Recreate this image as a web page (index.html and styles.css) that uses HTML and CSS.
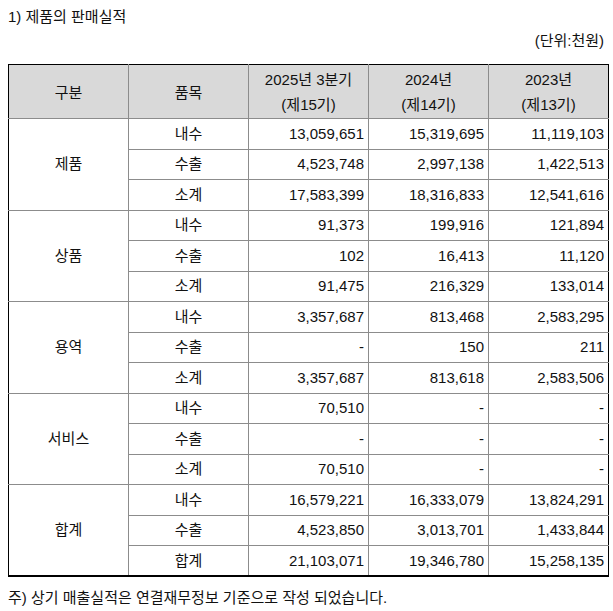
FILE: index.html
```html
<!DOCTYPE html>
<html lang="ko">
<head>
<meta charset="utf-8">
<link rel="stylesheet" href="styles.css">
</head>
<body>
<div class="title">1) 제품의 판매실적</div>
<div class="unit">(단위:천원)</div>
<table class="sales">
  <thead>
    <tr>
      <th>구분</th>
      <th>품목</th>
      <th>2025년 3분기<br>(제15기)</th>
      <th>2024년<br>(제14기)</th>
      <th>2023년<br>(제13기)</th>
    </tr>
  </thead>
  <tbody>
    <tr><td rowspan="3" class="grp">제품</td><td class="item">내수</td><td>13,059,651</td><td>15,319,695</td><td>11,119,103</td></tr>
    <tr><td class="item">수출</td><td>4,523,748</td><td>2,997,138</td><td>1,422,513</td></tr>
    <tr><td class="item">소계</td><td>17,583,399</td><td>18,316,833</td><td>12,541,616</td></tr>
    <tr><td rowspan="3" class="grp">상품</td><td class="item">내수</td><td>91,373</td><td>199,916</td><td>121,894</td></tr>
    <tr><td class="item">수출</td><td>102</td><td>16,413</td><td>11,120</td></tr>
    <tr><td class="item">소계</td><td>91,475</td><td>216,329</td><td>133,014</td></tr>
    <tr><td rowspan="3" class="grp">용역</td><td class="item">내수</td><td>3,357,687</td><td>813,468</td><td>2,583,295</td></tr>
    <tr><td class="item">수출</td><td>-</td><td>150</td><td>211</td></tr>
    <tr><td class="item">소계</td><td>3,357,687</td><td>813,618</td><td>2,583,506</td></tr>
    <tr><td rowspan="3" class="grp">서비스</td><td class="item">내수</td><td>70,510</td><td>-</td><td>-</td></tr>
    <tr><td class="item">수출</td><td>-</td><td>-</td><td>-</td></tr>
    <tr><td class="item">소계</td><td>70,510</td><td>-</td><td>-</td></tr>
    <tr><td rowspan="3" class="grp">합계</td><td class="item">내수</td><td>16,579,221</td><td>16,333,079</td><td>13,824,291</td></tr>
    <tr><td class="item">수출</td><td>4,523,850</td><td>3,013,701</td><td>1,433,844</td></tr>
    <tr><td class="item">합계</td><td>21,103,071</td><td>19,346,780</td><td>15,258,135</td></tr>
  </tbody>
</table>
<div class="note">주) 상기 매출실적은 연결재무정보 기준으로 작성 되었습니다.</div>
</body>
</html>
```

FILE: styles.css
```css
html, body {
  margin: 0;
  padding: 0;
  background: #ffffff;
}
body {
  padding: 8px;
  font-family: "Liberation Sans", "Noto Sans CJK KR", sans-serif;
  font-size: 15px;
  color: #111111;
  line-height: 18px;
}
.title {
  height: 18px;
}
.unit {
  margin-top: 6px;
  width: 596px;
  text-align: right;
}
.sales {
  margin-top: 14px;
  width: 601px;
  border-collapse: collapse;
  table-layout: fixed;
  border: 1px solid #000000;
  border-bottom-width: 2px;
}
.sales th,
.sales td {
  border: 1px solid #8c8c8c;
  padding: 0 4px;
  font-weight: normal;
  white-space: nowrap;
}
.sales th {
  background: #d9d9d9;
  height: 52px;
  text-align: center;
  line-height: 25px;
  padding-top: 1px;
}
.sales tbody tr {
  height: 30.5px;
}
.sales td {
  text-align: right;
}
.sales td.grp,
.sales td.item {
  text-align: center;
}
.sales thead tr th:first-child,
.sales td.grp {
  border-left: 1px solid #000000;
}
.sales thead tr th {
  border-top: 1px solid #000000;
}
.sales thead tr th:last-child,
.sales tbody tr td:last-child {
  border-right: 1px solid #000000;
}
.sales tbody tr:last-child td,
.sales tbody tr:last-child ~ td,
.sales tbody tr:nth-last-child(-n+3) td.grp {
  border-bottom: 2px solid #000000;
}
.note {
  margin-top: 12px;
}
```
